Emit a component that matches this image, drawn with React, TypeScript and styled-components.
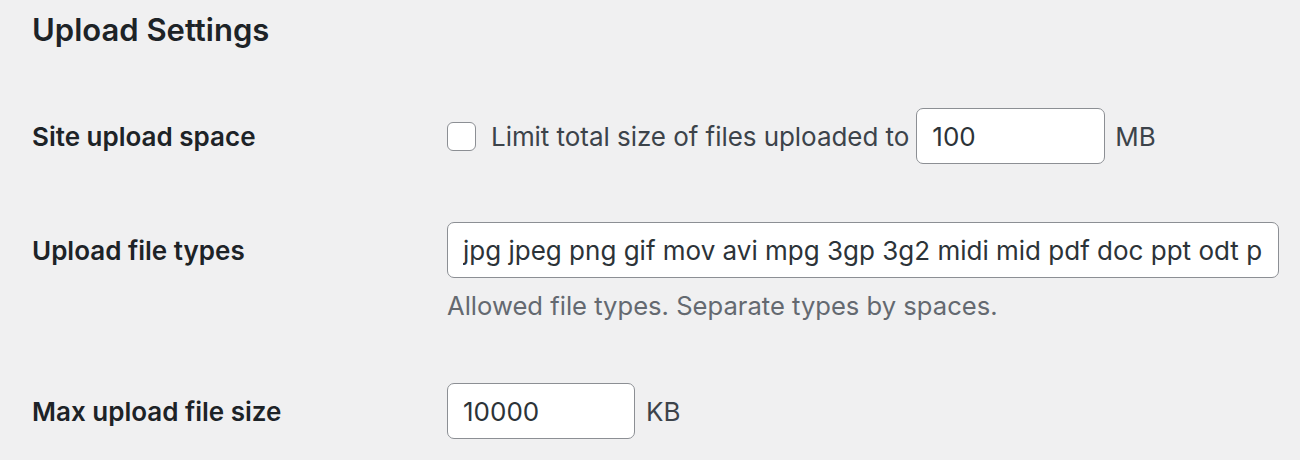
import React from "react";
import styled, { createGlobalStyle } from "styled-components";

const GlobalStyle = createGlobalStyle`
  html, body {
    margin: 0;
    padding: 0;
    background: #f0f0f1;
  }
  body {
    font-family: Inter, "Noto Sans", "Liberation Sans", sans-serif;
    color: #3c434a;
  }
`;

const Page = styled.div`
  padding: 10px 0 0 32px;
  width: 1248px;
`;

const Heading = styled.h2`
  margin: 0 0 29px;
  font-size: 31px;
  line-height: 40px;
  font-weight: 600;
  color: #1d2327;
`;

const Row = styled.div`
  display: grid;
  grid-template-columns: 415px 1fr;
  padding: 29px 0;
  align-items: start;
`;

const Label = styled.label`
  display: flex;
  align-items: center;
  min-height: 56px;
  font-size: 26px;
  font-weight: 600;
  color: #1d2327;
`;

const Field = styled.div`
  display: flex;
  flex-direction: column;
`;

const Line = styled.div`
  display: flex;
  align-items: center;
  min-height: 56px;
  font-size: 26px;
  letter-spacing: -0.05px;
  color: #3c434a;
`;

const Checkbox = styled.input.attrs({ type: "checkbox" })`
  appearance: none;
  margin: 0 15px 0 0;
  width: 29px;
  height: 29px;
  box-sizing: border-box;
  border: 1px solid #8c8f94;
  border-radius: 6px;
  background: #fff;
  flex: none;
`;

const TextInput = styled.input<{ $width: number; $gap?: number }>`
  box-sizing: border-box;
  width: ${(p) => p.$width}px;
  height: 56px;
  margin: 0 ${(p) => p.$gap ?? 0}px 0 0;
  padding: 0 15px;
  border: 1px solid #8c8f94;
  border-radius: 7px;
  background: #fff;
  font-family: Inter, "Noto Sans", "Liberation Sans", sans-serif;
  font-size: 26px;
  color: #2c3338;
  outline: none;
  flex: none;
`;

const Inline = styled.span<{ $gap?: number }>`
  margin-right: ${(p) => p.$gap ?? 0}px;
  white-space: nowrap;
`;

const Description = styled.p`
  margin: 8px 0 0;
  font-size: 25.6px;
  line-height: 39px;
  color: #646970;
`;

export default function App() {
  return (
    <>
      <GlobalStyle />
      <Page>
        <Heading>Upload Settings</Heading>
        <Row>
          <Label>Site upload space</Label>
          <Field>
            <Line>
              <Checkbox />
              <Inline $gap={7}>Limit total size of files uploaded to</Inline>
              <TextInput $width={189} $gap={10} defaultValue="100" />
              <Inline>MB</Inline>
            </Line>
          </Field>
        </Row>
        <Row>
          <Label>Upload file types</Label>
          <Field>
            <Line>
              <TextInput
                $width={832}
                defaultValue="jpg jpeg png gif mov avi mpg 3gp 3g2 midi mid pdf doc ppt odt pptx docx pps ppsx xls xlsx key mp3 ogg flac m4a wav mp4 m4v webm ogv flv"
              />
            </Line>
            <Description>Allowed file types. Separate types by spaces.</Description>
          </Field>
        </Row>
        <Row>
          <Label>Max upload file size</Label>
          <Field>
            <Line>
              <TextInput $width={188} $gap={11} defaultValue="10000" />
              <Inline>KB</Inline>
            </Line>
          </Field>
        </Row>
      </Page>
    </>
  );
}
